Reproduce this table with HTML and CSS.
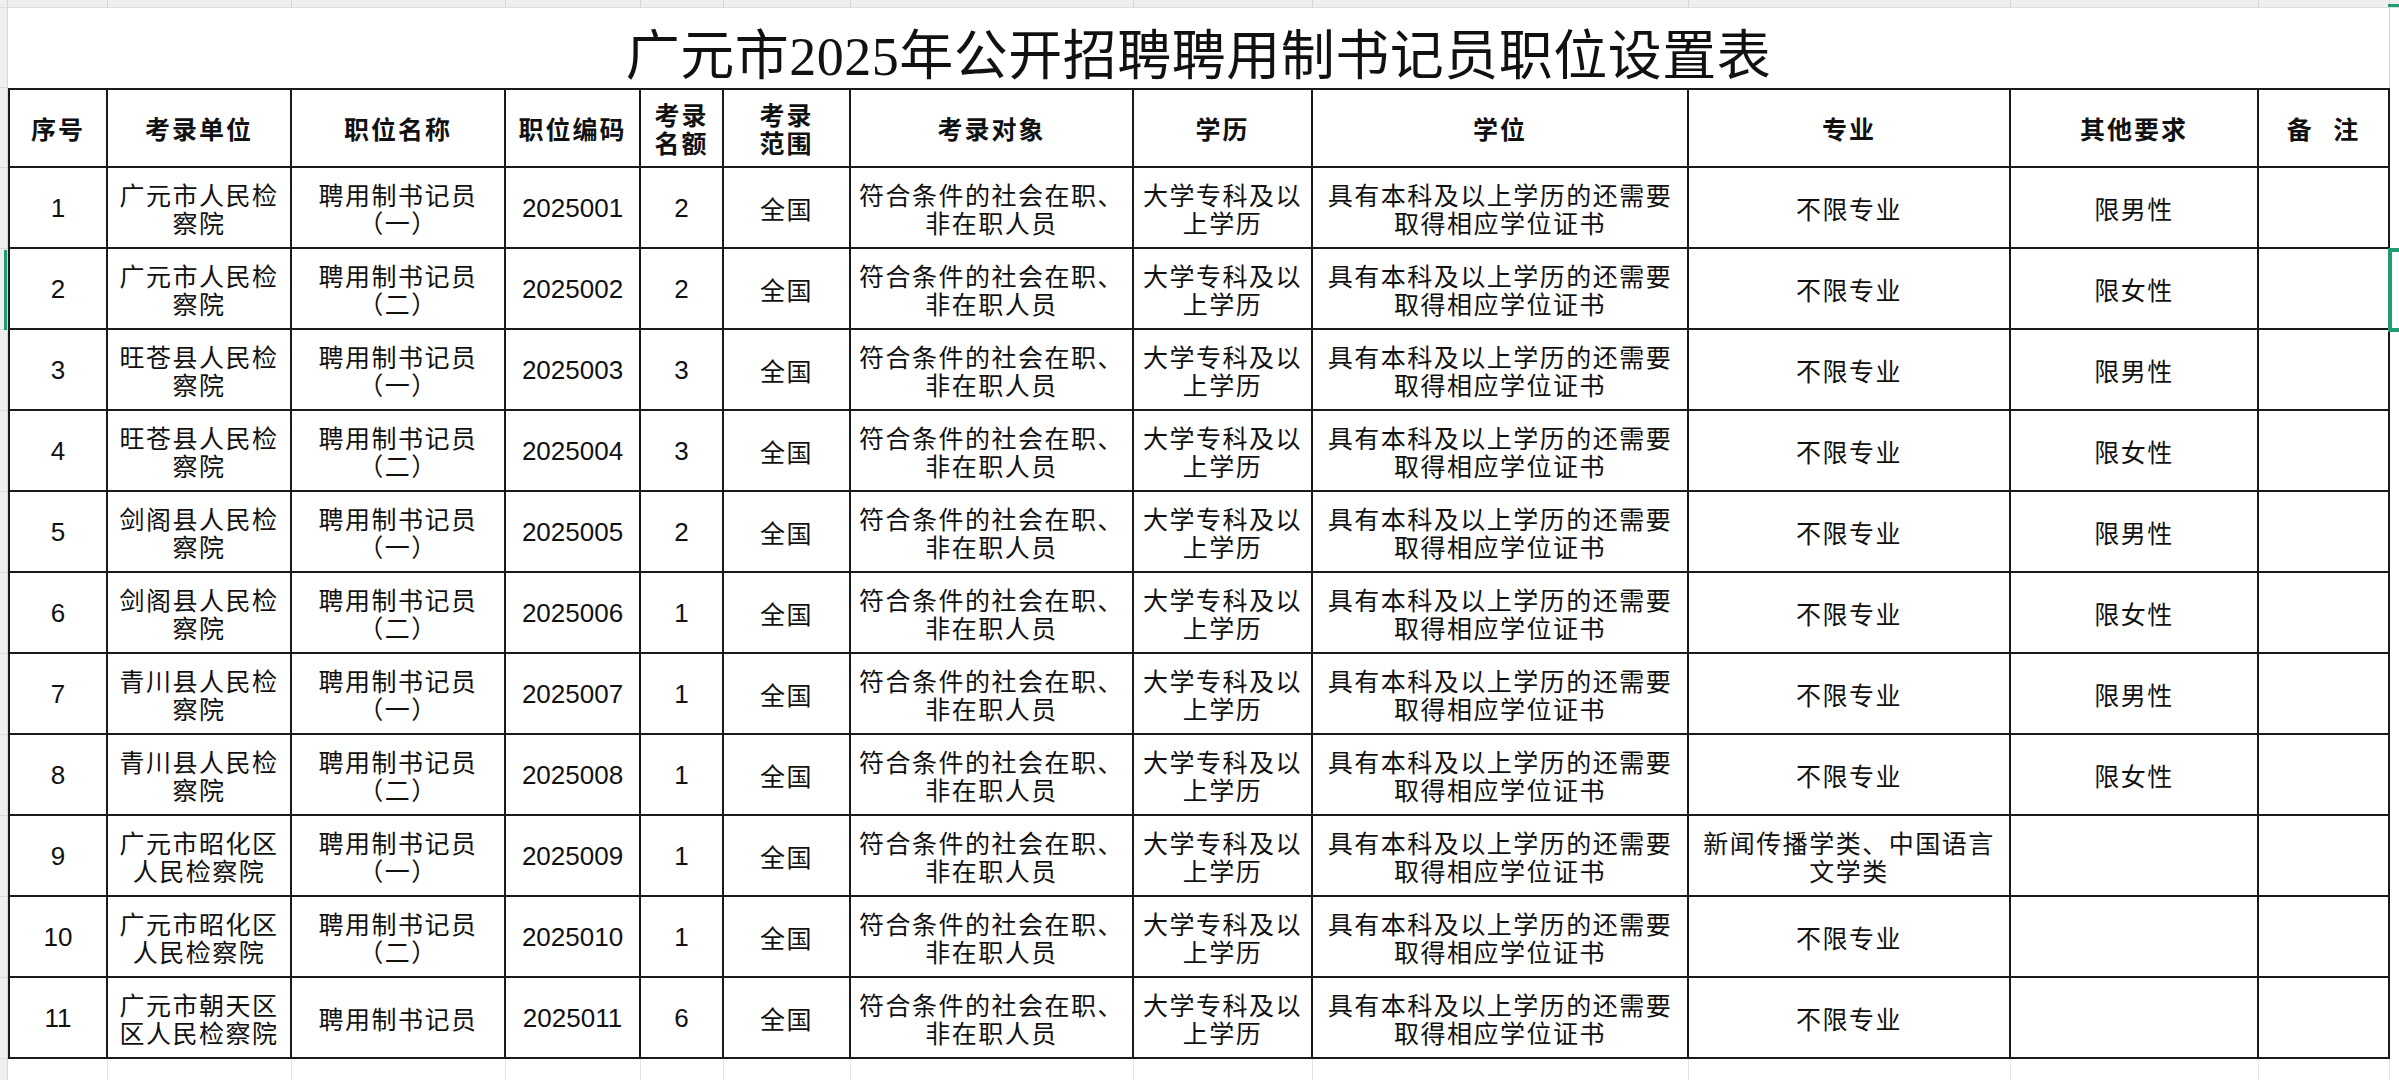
FILE: index.html
```html
<!DOCTYPE html>
<html lang="zh-CN">
<head>
<meta charset="utf-8">
<title>广元市2025年公开招聘聘用制书记员职位设置表</title>
<link rel="stylesheet" href="styles.css">
</head>
<body>
<div class="screen">
  <div class="colbar">
    <div></div><div></div><div></div><div></div><div></div><div></div><div></div><div></div><div></div><div></div><div></div><div></div><div></div><div class="last"></div>
  </div>
  <div class="main">
    <div class="rowbar">
      <div class="rb-title"></div><div class="rb-head"></div>
      <div class="rb-row"></div><div class="rb-row"></div><div class="rb-row"></div><div class="rb-row"></div><div class="rb-row"></div><div class="rb-row"></div><div class="rb-row"></div><div class="rb-row"></div><div class="rb-row"></div><div class="rb-row"></div><div class="rb-row"></div>
      <div class="rb-rest"></div>
    </div>
    <div class="sheet">
      <div class="title">广元市2025年公开招聘聘用制书记员职位设置表</div>
      <div class="grid">
        <div class="hd">序号</div>
        <div class="hd">考录单位</div>
        <div class="hd">职位名称</div>
        <div class="hd">职位编码</div>
        <div class="hd">考录<br>名额</div>
        <div class="hd">考录<br>范围</div>
        <div class="hd">考录对象</div>
        <div class="hd">学历</div>
        <div class="hd">学位</div>
        <div class="hd">专业</div>
        <div class="hd">其他要求</div>
        <div class="hd note">备 注</div>

        <div class="num">1</div><div>广元市人民检<br>察院</div><div>聘用制书记员<br>（一）</div><div class="num">2025001</div><div class="num">2</div><div>全国</div><div>符合条件的社会在职、<br>非在职人员</div><div>大学专科及以<br>上学历</div><div>具有本科及以上学历的还需要<br>取得相应学位证书</div><div>不限专业</div><div>限男性</div><div></div>

        <div class="num">2</div><div>广元市人民检<br>察院</div><div>聘用制书记员<br>（二）</div><div class="num">2025002</div><div class="num">2</div><div>全国</div><div>符合条件的社会在职、<br>非在职人员</div><div>大学专科及以<br>上学历</div><div>具有本科及以上学历的还需要<br>取得相应学位证书</div><div>不限专业</div><div>限女性</div><div></div>

        <div class="num">3</div><div>旺苍县人民检<br>察院</div><div>聘用制书记员<br>（一）</div><div class="num">2025003</div><div class="num">3</div><div>全国</div><div>符合条件的社会在职、<br>非在职人员</div><div>大学专科及以<br>上学历</div><div>具有本科及以上学历的还需要<br>取得相应学位证书</div><div>不限专业</div><div>限男性</div><div></div>

        <div class="num">4</div><div>旺苍县人民检<br>察院</div><div>聘用制书记员<br>（二）</div><div class="num">2025004</div><div class="num">3</div><div>全国</div><div>符合条件的社会在职、<br>非在职人员</div><div>大学专科及以<br>上学历</div><div>具有本科及以上学历的还需要<br>取得相应学位证书</div><div>不限专业</div><div>限女性</div><div></div>

        <div class="num">5</div><div>剑阁县人民检<br>察院</div><div>聘用制书记员<br>（一）</div><div class="num">2025005</div><div class="num">2</div><div>全国</div><div>符合条件的社会在职、<br>非在职人员</div><div>大学专科及以<br>上学历</div><div>具有本科及以上学历的还需要<br>取得相应学位证书</div><div>不限专业</div><div>限男性</div><div></div>

        <div class="num">6</div><div>剑阁县人民检<br>察院</div><div>聘用制书记员<br>（二）</div><div class="num">2025006</div><div class="num">1</div><div>全国</div><div>符合条件的社会在职、<br>非在职人员</div><div>大学专科及以<br>上学历</div><div>具有本科及以上学历的还需要<br>取得相应学位证书</div><div>不限专业</div><div>限女性</div><div></div>

        <div class="num">7</div><div>青川县人民检<br>察院</div><div>聘用制书记员<br>（一）</div><div class="num">2025007</div><div class="num">1</div><div>全国</div><div>符合条件的社会在职、<br>非在职人员</div><div>大学专科及以<br>上学历</div><div>具有本科及以上学历的还需要<br>取得相应学位证书</div><div>不限专业</div><div>限男性</div><div></div>

        <div class="num">8</div><div>青川县人民检<br>察院</div><div>聘用制书记员<br>（二）</div><div class="num">2025008</div><div class="num">1</div><div>全国</div><div>符合条件的社会在职、<br>非在职人员</div><div>大学专科及以<br>上学历</div><div>具有本科及以上学历的还需要<br>取得相应学位证书</div><div>不限专业</div><div>限女性</div><div></div>

        <div class="num">9</div><div>广元市昭化区<br>人民检察院</div><div>聘用制书记员<br>（一）</div><div class="num">2025009</div><div class="num">1</div><div>全国</div><div>符合条件的社会在职、<br>非在职人员</div><div>大学专科及以<br>上学历</div><div>具有本科及以上学历的还需要<br>取得相应学位证书</div><div>新闻传播学类、中国语言<br>文学类</div><div></div><div></div>

        <div class="num">10</div><div>广元市昭化区<br>人民检察院</div><div>聘用制书记员<br>（二）</div><div class="num">2025010</div><div class="num">1</div><div>全国</div><div>符合条件的社会在职、<br>非在职人员</div><div>大学专科及以<br>上学历</div><div>具有本科及以上学历的还需要<br>取得相应学位证书</div><div>不限专业</div><div></div><div></div>

        <div class="num">11</div><div>广元市朝天区<br>区人民检察院</div><div>聘用制书记员</div><div class="num">2025011</div><div class="num">6</div><div>全国</div><div>符合条件的社会在职、<br>非在职人员</div><div>大学专科及以<br>上学历</div><div>具有本科及以上学历的还需要<br>取得相应学位证书</div><div>不限专业</div><div></div><div></div>
      </div>
      <div class="below">
        <div></div><div></div><div></div><div></div><div></div><div></div><div></div><div></div><div></div><div></div><div></div><div></div>
      </div>
    </div>
  </div>
  <div class="sel-colmark"></div>
  <div class="sel-rowmark"></div>
  <div class="sel-cell"></div>
</div>
</body>
</html>
```

FILE: styles.css
```css
html, body {
  margin: 0;
  padding: 0;
  background: #ffffff;
}

.screen {
  position: relative;
  width: 2399px;
  height: 1080px;
  overflow: hidden;
  background: #ffffff;
  font-family: "Noto Sans CJK SC", sans-serif;
  color: #111111;
}

/* spreadsheet column header strip (cut off at top) */
.colbar {
  display: grid;
  grid-template-columns: 8px 100px 184px 214px 135px 83px 127px 283px 179px 376px 322px 248px 131px 1fr;
  height: 8px;
  background: #efefef;
  box-sizing: border-box;
  border-bottom: 1px solid #dcdcdc;
}

.colbar > div {
  border-right: 1px solid #d6d6d6;
}

.colbar > div.last {
  border-right: none;
}

.main {
  display: flex;
  height: 1072px;
}

/* spreadsheet row header strip (cut off at left) */
.rowbar {
  width: 8px;
  flex: none;
  display: flex;
  flex-direction: column;
  background: #efefef;
  box-sizing: border-box;
  border-right: 1px solid #d6d6d6;
}

.rowbar > div {
  box-sizing: border-box;
  border-bottom: 1px solid #dadada;
  flex: none;
}

.rb-title { height: 80px; }
.rb-head { height: 80px; }
.rb-row { height: 81px; }
.rowbar > .rb-rest { flex: 1; border-bottom: none; }

.sheet {
  flex: 1;
  display: flex;
  flex-direction: column;
}

.title {
  height: 80px;
  width: 2382px;
  box-sizing: border-box;
  border-right: 1px solid #d4d4d4;
  display: flex;
  align-items: center;
  justify-content: center;
  padding-top: 6px;
  font-family: "Liberation Serif", "Noto Sans CJK SC", serif;
  font-size: 54px;
  letter-spacing: 0.5px;
  font-weight: 400;
  color: #111111;
  white-space: nowrap;
}

.grid {
  display: grid;
  grid-template-columns: 98px 184px 214px 135px 83px 127px 283px 179px 376px 322px 248px 131px;
  grid-template-rows: 78px repeat(11, 81px);
  width: max-content;
  border-left: 2px solid #1a1a1a;
  border-top: 2px solid #1a1a1a;
}

.grid > div {
  box-sizing: border-box;
  border-right: 2px solid #1a1a1a;
  border-bottom: 2px solid #1a1a1a;
  display: flex;
  align-items: center;
  justify-content: center;
  text-align: center;
  font-size: 25px;
  line-height: 28px;
  letter-spacing: 1.5px;
  white-space: nowrap;
  color: #111111;
}

.grid > div.hd {
  font-weight: 700;
  font-size: 25px;
  letter-spacing: 2px;
}

.grid > div.note {
  word-spacing: 12px;
}

.grid > div.num {
  font-family: "Liberation Sans", sans-serif;
  font-size: 26px;
  letter-spacing: 0;
}

/* faint spreadsheet gridlines under the table */
.below {
  flex: 1;
  display: grid;
  grid-template-columns: 100px 184px 214px 135px 83px 127px 283px 179px 376px 322px 248px 131px;
  width: max-content;
}

.below > div {
  border-right: 1px solid #e3e3e3;
}

/* selection indicators of the spreadsheet */
.sel-colmark {
  position: absolute;
  left: 2388px;
  top: 4px;
  width: 11px;
  height: 3px;
  background: #1f9d6c;
}

.sel-rowmark {
  position: absolute;
  left: 4px;
  top: 250px;
  width: 3px;
  height: 80px;
  background: #1f9d6c;
}

.sel-cell {
  position: absolute;
  left: 2388px;
  top: 248px;
  width: 30px;
  height: 84px;
  box-sizing: border-box;
  border: 4px solid #1f9d6c;
}
```
